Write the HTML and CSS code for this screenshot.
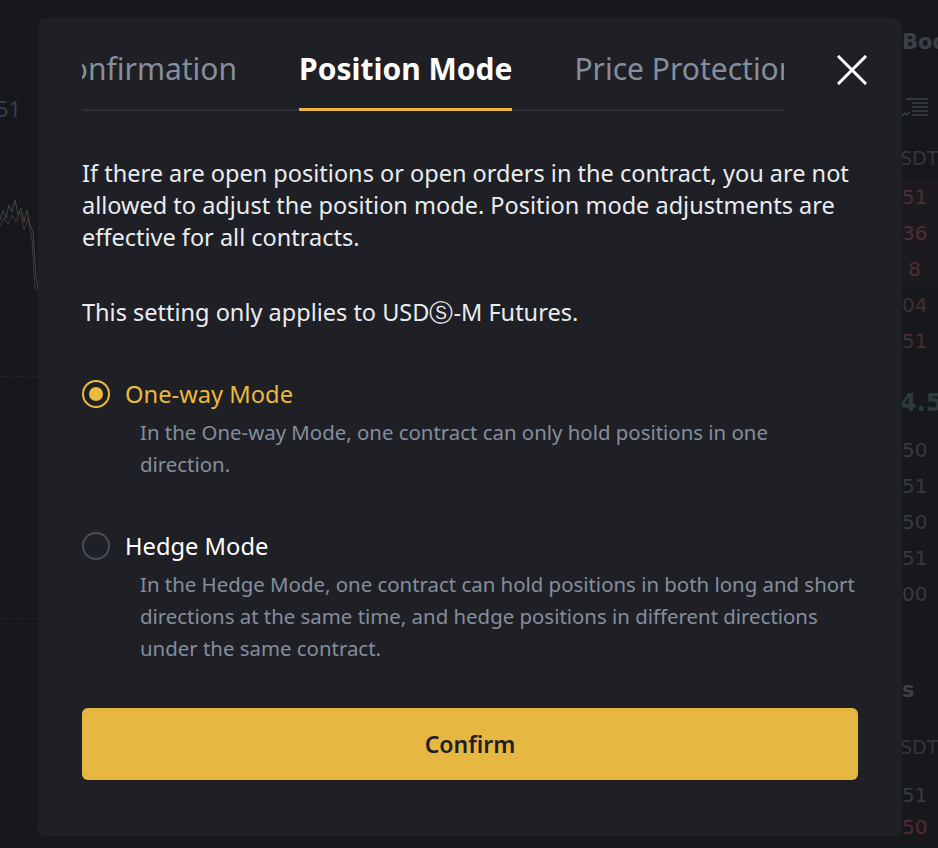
FILE: index.html
```html
<!DOCTYPE html>
<html lang="en">
<head>
<meta charset="utf-8">
<title>Position Mode</title>
<link rel="stylesheet" href="styles.css">
</head>
<body>
<div class="page">
  <div class="chart">
    <div class="axis-label">51</div>
    <svg class="chart-lines" width="40" height="140" viewBox="0 0 40 140">
      <polyline points="0,40 3,30 6,38 9,25 12,32 15,20 18,35 21,28 24,42 27,30 30,45 33,52 36,96 38,110" fill="none" stroke="#3a4a48" stroke-width="1"/>
      <polyline points="0,46 4,38 8,44 12,35 16,42 20,32 24,50 28,38 32,60 35,110" fill="none" stroke="#4a3336" stroke-width="1"/>
    </svg>
    <div class="grid-line first"></div>
    <div class="grid-line second"></div>
  </div>
  <div class="book">
    <div class="book-title">Boo</div>
    <div class="book-icon">
      <svg width="30" height="22" viewBox="0 0 30 22">
        <path d="M4 2h22M10 6h16M10 10h16M10 14h16M10 18h16" stroke="#3d424a" stroke-width="1.4"/>
        <path d="M0 19l3-3 2 2 3-3" stroke="#2f4a44" stroke-width="1.4" fill="none"/>
      </svg>
    </div>
    <div class="book-head">SDT</div>
    <div class="book-row ask">51</div>
    <div class="book-row ask">36</div>
    <div class="book-row ask">&nbsp;8</div>
    <div class="book-row dim-red">04</div>
    <div class="book-row dim-red">51</div>
    <div class="book-mid">4.5</div>
    <div class="book-row">50</div>
    <div class="book-row">51</div>
    <div class="book-row">50</div>
    <div class="book-row">51</div>
    <div class="book-row">00</div>
    <div class="book-title trades">s</div>
    <div class="book-head">SDT</div>
    <div class="book-row trade">51</div>
    <div class="book-row trade red">50</div>
  </div>
</div>

<div class="modal" role="dialog" aria-label="Preference">
  <div class="modal-head">
    <div class="tabs">
      <div class="tabs-track">
        <div class="tab">Order Confirmation</div>
        <div class="tab active">Position Mode</div>
        <div class="tab">Price Protection</div>
      </div>
    </div>
    <button class="close" aria-label="Close">
      <svg width="30" height="30" viewBox="0 0 30 30">
        <path d="M2 2L28 28M28 2L2 28" stroke="#ffffff" stroke-width="3" stroke-linecap="square"/>
      </svg>
    </button>
  </div>
  <div class="modal-body">
    <p class="note">If there are open positions or open orders in the contract, you are not allowed to adjust the position mode. Position mode adjustments are effective for all contracts.</p>
    <p class="note second">This setting only applies to USDⓈ-M Futures.</p>

    <div class="option selected">
      <div class="option-row">
        <span class="radio"></span>
        <span class="option-title">One-way Mode</span>
      </div>
      <div class="option-desc">In the One-way Mode, one contract can only hold positions in one direction.</div>
    </div>

    <div class="option">
      <div class="option-row">
        <span class="radio"></span>
        <span class="option-title">Hedge Mode</span>
      </div>
      <div class="option-desc">In the Hedge Mode, one contract can hold positions in both long and short directions at the same time, and hedge positions in different directions under the same contract.</div>
    </div>

    <button class="confirm">Confirm</button>
  </div>
</div>
</body>
</html>
```

FILE: styles.css
```css
* { box-sizing: border-box; }

html, body {
  margin: 0;
  padding: 0;
  height: 100%;
}

body {
  background: #17181c;
  font-family: "Noto Sans", "Open Sans", sans-serif;
  overflow: hidden;
  position: relative;
}

/* ---------- background page (dimmed) ---------- */
.page {
  display: grid;
  grid-template-columns: 1fr 48px;
  height: 848px;
}

.chart {
  display: flex;
  flex-direction: column;
}

.axis-label {
  margin-top: 96px;
  margin-left: -4px;
  font-size: 22px;
  color: #3a3e45;
  line-height: 24px;
}

.chart-lines {
  margin-top: 60px;
}

.grid-line {
  height: 0;
  border-top: 1px dashed #26282d;
  width: 40px;
}
.grid-line.first { margin-top: 56px; }
.grid-line.second { margin-top: 241px; }

.book {
  display: flex;
  flex-direction: column;
  padding-left: 12px;
  font-family: "DejaVu Sans", sans-serif;
  color: #3b4047;
  white-space: nowrap;
  overflow: hidden;
}

.book-title {
  margin-top: 28px;
  font-size: 21px;
  font-weight: 700;
  color: #3c4048;
  line-height: 28px;
}

.book-icon {
  margin-top: 41px;
  height: 22px;
}

.book-head {
  margin-top: 27px;
  font-size: 19px;
  line-height: 24px;
  color: #32363c;
  margin-left: -2px;
}

.book-row {
  font-size: 20px;
  line-height: 36px;
  color: #363b40;
}

.book-row.ask {
  color: #4d2f33;
  background: #1c1a1e;
  margin-left: -12px;
  padding-left: 12px;
}

.book-row.dim-red { color: #43302f; }

.book-row.red { color: #57292d; }

.book-head + .book-row { margin-top: 9px; }

.book-mid {
  margin-top: 24px;
  font-size: 24px;
  font-weight: 700;
  line-height: 40px;
  color: #2d3a37;
  margin-left: -2px;
}
.book-mid + .book-row { margin-top: 9px; }

.book-title.trades {
  margin-top: 64px;
}

.trades + .book-head { margin-top: 31px; }

.book-row.trade { line-height: 32px; }
.trades + .book-head + .book-row { margin-top: 20px; }

/* ---------- modal ---------- */
.modal {
  position: absolute;
  left: 38px;
  top: 18px;
  width: 864px;
  height: 818px;
  background: #1f2026;
  border-radius: 8px;
  padding: 0 44px 56px;
  display: flex;
  flex-direction: column;
  color: #eaecef;
}

.modal-head {
  display: flex;
  align-items: flex-start;
  justify-content: space-between;
}

.tabs {
  width: 702px;
  overflow: hidden;
  box-shadow: inset 0 -2px 0 #2b2f36;
  height: 93px;
}

.tabs-track {
  display: flex;
  gap: 62px;
  margin-left: -122px;
  height: 100%;
}

.tab {
  flex: none;
  font-size: 30px;
  line-height: 40px;
  padding-top: 31px;
  color: #848e9c;
  white-space: nowrap;
  height: 100%;
}

.tab.active {
  color: #ffffff;
  font-weight: 700;
  box-shadow: inset 0 -3px 0 #e9b73e;
}

.close {
  margin-top: 37px;
  margin-right: -9px;
  width: 30px;
  height: 30px;
  padding: 0;
  border: 0;
  background: transparent;
  cursor: pointer;
  display: flex;
}

.modal-body {
  display: flex;
  flex-direction: column;
  flex: 1;
}

.note {
  margin: 46px 0 0;
  font-size: 23.5px;
  line-height: 32px;
  color: #eaecef;
}

.note.second {
  margin-top: 43px;
}

.option {
  display: flex;
  flex-direction: column;
}

.note.second + .option { margin-top: 50px; }
.option + .option { margin-top: 50px; }

.option-row {
  display: flex;
  align-items: center;
  gap: 15px;
  height: 32px;
}

.radio {
  width: 28px;
  height: 28px;
  border-radius: 50%;
  border: 2px solid #474d57;
  display: flex;
  align-items: center;
  justify-content: center;
  flex: none;
}

.option.selected .radio {
  border-color: #ebb93c;
}

.option.selected .radio::after {
  content: "";
  width: 14px;
  height: 14px;
  border-radius: 50%;
  background: #ebb93c;
}

.option-title {
  font-size: 23.7px;
  line-height: 32px;
  color: #ffffff;
}

.option.selected .option-title {
  color: #ebb93c;
}

.option-desc {
  margin-top: 6px;
  padding-left: 58px;
  font-size: 20.4px;
  line-height: 32px;
  color: #848e9c;
}

.confirm {
  margin-top: auto;
  height: 72px;
  border: 0;
  border-radius: 6px;
  background: #e7b841;
  color: #1e2026;
  font-family: inherit;
  font-size: 23px;
  font-weight: 600;
  cursor: pointer;
}
```
